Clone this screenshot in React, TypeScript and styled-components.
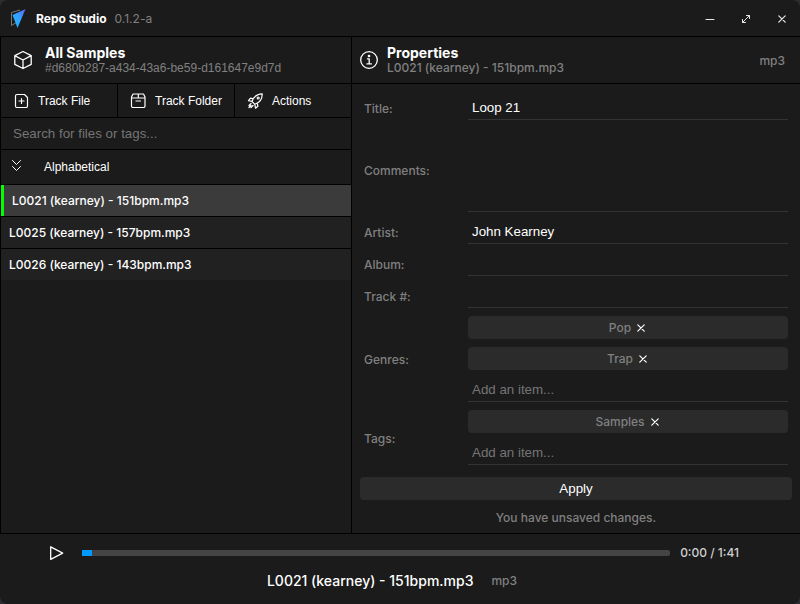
import React, { useState } from "react";
import styled, { createGlobalStyle } from "styled-components";

const c = {
  bg: "#1b1b1b",
  row: "#212121",
  active: "#3b3b3b",
  raised: "#2b2b2b",
  line: "#000000",
  rule: "#333333",
  muted: "#808080",
  dim: "#757575",
  text: "#ffffff",
  accent: "#0099ff",
  track: "#444444",
  green: "#00ff00",
};

const Global = createGlobalStyle`
  * { box-sizing: border-box; }
  html { background: #2c2d31; }
  body { margin: 0; font: 500 12px/16px Inter, sans-serif; color: ${c.text}; }
  button, input, textarea { font-family: "Liberation Sans", Arial, sans-serif; color: inherit; background: none; border: 0; padding: 0; margin: 0; border-radius: 0; outline: 0; }
  button { cursor: pointer; }
  input::placeholder { color: ${c.dim}; opacity: 1; }
  svg { display: block; flex: none; }
`;

const Window = styled.div`
  min-height: 100vh;
  display: flex;
  flex-direction: column;
  background: ${c.bg};
  border-radius: 8px;
  overflow: hidden;
`;

const TitleBar = styled.header`
  height: 36px;
  display: flex;
  align-items: center;
  padding: 1px 8px 0 8px;
`;
const AppName = styled.h1`
  margin: 0 8px 0 9px;
  font-size: 12px;
  font-weight: 700;
  line-height: 16px;
`;
const Version = styled.span`
  flex: 1;
  font-weight: 400;
  color: ${c.muted};
`;
const WindowButton = styled.button`
  width: 36px;
  height: 28px;
  display: grid;
  place-items: center;
  color: #e8e8e8;
  &:last-child { width: 20px; margin-left: 8px; }
`;

const Body = styled.main`
  flex: 1;
  display: grid;
  grid-template-columns: 350px 1fr;
  gap: 1px;
  padding: 1px 0 1px 1px;
  background: ${c.line};
`;
const Panel = styled.section`
  display: flex;
  flex-direction: column;
  background: ${c.bg};
`;
const PanelHeader = styled.header<{ $inset: number }>`
  height: 47px;
  display: flex;
  align-items: center;
  gap: ${(p) => (p.$inset > 8 ? 12 : 8)}px;
  padding: 0 15px 0 ${(p) => p.$inset}px;
  border-bottom: 1px solid ${c.line};
`;
const HeaderText = styled.div`
  flex: 1;
`;
const PanelTitle = styled.h2`
  margin: 0;
  font-size: 14px;
  line-height: 16px;
  font-weight: 700;
`;
const PanelSubtitle = styled.p<{ $code?: boolean }>`
  margin: 0;
  font-family: ${(p) => (p.$code ? `"Liberation Sans", Arial, sans-serif` : "inherit")};
  font-size: 12px;
  line-height: 14px;
  color: ${c.muted};
`;
const FileType = styled.span`
  padding-top: 2px;
  color: ${c.muted};
`;

const Toolbar = styled.div`
  height: 34px;
  display: grid;
  grid-template-columns: 117px 117px 1fr;
  border-bottom: 1px solid ${c.line};
`;
const ToolButton = styled.button`
  display: flex;
  align-items: center;
  gap: 7px;
  padding-left: 12px;
  font-size: 12px;
  border-right: 1px solid ${c.line};
  &:last-child { border-right: 0; }
`;
const Search = styled.input`
  height: 32px;
  padding: 0 12px;
  border-bottom: 1px solid ${c.line};
`;
const SortButton = styled.button`
  height: 35px;
  display: flex;
  align-items: center;
  gap: 19px;
  padding-left: 8px;
  font-size: 12px;
  border-bottom: 1px solid ${c.line};
`;
const FileList = styled.ul`
  margin: 0;
  padding: 0;
  list-style: none;
  display: grid;
  gap: 1px;
  background: ${c.line};
`;
const FileRow = styled.button<{ $active: boolean }>`
  width: 100%;
  height: 31px;
  display: block;
  padding-left: 8px;
  font: inherit;
  text-align: left;
  background: ${(p) => (p.$active ? c.active : c.row)};
  border-left: ${(p) => (p.$active ? `3px solid ${c.green}` : "0")};
`;

const Form = styled.form`
  flex: 1;
  display: flex;
  flex-direction: column;
  padding: 8px 8px 4px;
`;
const Fields = styled.div`
  display: grid;
  grid-template-columns: 104px 1fr;
  row-gap: 8px;
  align-items: center;
  padding: 4px 4px 12px;
`;
const Label = styled.label`
  padding-top: 2px;
  color: ${c.muted};
`;
const TextField = styled.input`
  width: 100%;
  height: 24px;
  padding: 0 4px;
  border-bottom: 1px solid ${c.rule};
`;
const TextArea = styled.textarea`
  display: block;
  width: 100%;
  height: 84px;
  padding: 4px;
  resize: none;
  border-bottom: 1px solid ${c.rule};
`;
const Items = styled.div`
  display: grid;
  gap: 8px;
`;
const Chip = styled.div`
  height: 23px;
  display: flex;
  align-items: center;
  justify-content: center;
  gap: 6px;
  padding-right: 2px;
  border-radius: 4px;
  background: ${c.raised};
  color: ${c.muted};
`;
const Remove = styled.button`
  color: ${c.text};
`;
const Apply = styled.button`
  height: 23px;
  border-radius: 4px;
  background: ${c.raised};
`;
const Notice = styled.p`
  margin: 10px 0 0;
  text-align: center;
  color: ${c.muted};
`;

const Player = styled.footer`
  height: 70px;
  padding-top: 9px;
`;
const Transport = styled.div`
  display: flex;
  align-items: center;
  padding: 0 61px 0 48px;
`;
const PlayButton = styled.button`
  width: 34px;
  height: 20px;
`;
const Seek = styled.input<{ $at: number }>`
  appearance: none;
  flex: 1;
  min-width: 0;
  height: 6px;
  border-radius: 0 2px 2px 0;
  background: linear-gradient(${c.accent}, ${c.accent}) 0 0 / ${(p) => p.$at}px 100% no-repeat ${c.track};
  &::-webkit-slider-thumb { appearance: none; width: 0; height: 6px; }
`;
const Time = styled.span`
  padding-left: 10px;
  color: #d0d0d0;
`;
const NowPlaying = styled.div`
  display: flex;
  align-items: center;
  justify-content: center;
  gap: 18px;
  margin-top: 8px;
  padding-right: 16px;
  font-size: 14px;
  line-height: 20px;
`;
const NowType = styled.span`
  font-size: 12px;
  color: ${c.muted};
`;

type StrokeProps = { size: number; box?: number; width?: number; children: React.ReactNode };
const Stroke = ({ size, box = 16, width = 1, children }: StrokeProps) => (
  <svg width={size} height={size} viewBox={`0 0 ${box} ${box}`} fill="none" stroke="currentColor" strokeWidth={width} strokeLinecap="round" strokeLinejoin="round" aria-hidden="true">
    {children}
  </svg>
);

const Logo = () => (
  <svg width="19" height="22" viewBox="0 0 19 22" aria-hidden="true">
    <defs>
      <linearGradient id="logo" x1="1" y1="0" x2="0.3" y2="1">
        <stop offset="0" stopColor="#5b5cf6" />
        <stop offset="0.5" stopColor="#35a0ff" />
        <stop offset="1" stopColor="#1cb4ff" />
      </linearGradient>
    </defs>
    <path d="M12 2 3.500 4.500V17.500l5-3" fill="none" stroke="#777777" />
    <path d="M17.500 1 4.500 7 9.500 20Z" fill="url(#logo)" />
  </svg>
);
const Cube = () => (
  <Stroke size={20} box={20} width={1.3}>
    <path d="M10 1.5 18.2 5.6v8.8L10 18.5 1.8 14.400V5.600ZM1.800 5.600 10 10l8.200-4.400M10 10v8.500" />
  </Stroke>
);
const Info = () => (
  <Stroke size={20} box={20} width={1.3}>
    <circle cx="10" cy="10" r="8.300" />
    <path d="M8.400 8.800H10.200v5M8 13.900h4.400" />
    <circle cx="10" cy="6" r="0.700" fill="currentColor" />
  </Stroke>
);
const FilePlus = () => (
  <Stroke size={18} box={18} width={1.2}>
    <path d="M4 2.500h7.500l3 3V14a1.500 1.500 0 0 1-1.500 1.500H4A1.500 1.500 0 0 1 2.500 14V4A1.500 1.500 0 0 1 4 2.500ZM8.500 6.500v5M6 9h5" />
  </Stroke>
);
const Archive = () => (
  <Stroke size={18} box={18} width={1.2}>
    <path d="M3 2h10.500l1.500 3v9a1.500 1.500 0 0 1-1.500 1.500h-10.500A1.500 1.500 0 0 1 1.500 14V5ZM1.500 6h13.500M8.300 2v4M6 9h4.500" />
  </Stroke>
);
const Rocket = () => (
  <Stroke size={18} box={18} width={1.2}>
    <path d="M5 9.500C6.300 5.500 9.500 2 15.200 1.800c.2 6-3.200 9.200-7.400 10.500ZM6.200 6.800 3.500 6.200 1.500 8.700l3.600.8M10.200 11l.7 3.200-2.400 2-.7-3.900M4 11.500 2 13.500M6 13.500 4 15.500M4 13.500l-2 2" />
    <circle cx="11.200" cy="6" r="1" />
  </Stroke>
);
const Chevrons = () => (
  <Stroke size={16}>
    <path d="M3.500 1.500 7.500 5.500l4-4M3.500 7.500l4 4 4-4" />
  </Stroke>
);
const Play = () => (
  <Stroke size={18} box={18} width={1.3}>
    <path d="M2.700 2.800v12.600L14.700 9.100Z" />
  </Stroke>
);
const Cross = () => (
  <Stroke size={8} box={8} width={1.2}>
    <path d="m0.800 0.800 6.400 6.400M7.200 0.800 0.800 7.200" />
  </Stroke>
);
const Minimize = () => (
  <Stroke size={10} box={10} width={1}>
    <path d="M1 5.500h8" />
  </Stroke>
);
const Expand = () => (
  <Stroke size={10} box={10} width={1}>
    <path d="M1.500 8.500l7-7M5.500 1.500h3v3M1.500 5.500v3h3" />
  </Stroke>
);

const files = ["L0021 (kearney) - 151bpm.mp3", "L0025 (kearney) - 157bpm.mp3", "L0026 (kearney) - 143bpm.mp3"];

type TagFieldProps = { id: string; label: string; initial: string[] };
const TagField = ({ id, label, initial }: TagFieldProps) => {
  const [items, setItems] = useState(initial);
  return (
    <>
      <Label htmlFor={id}>{label}</Label>
      <Items>
        {items.map((item) => (
          <Chip key={item}>
            {item}
            <Remove type="button" aria-label={`Remove ${item}`} onClick={() => setItems(items.filter((i) => i !== item))}>
              <Cross />
            </Remove>
          </Chip>
        ))}
        <TextField id={id} placeholder="Add an item..." />
      </Items>
    </>
  );
};

export default function App() {
  const [selected, setSelected] = useState(files[0]);
  const [position, setPosition] = useState("0");
  return (
    <Window>
      <Global />
      <TitleBar>
        <Logo />
        <AppName>Repo Studio</AppName>
        <Version>0.1.2-a</Version>
        <WindowButton aria-label="Minimize"><Minimize /></WindowButton>
        <WindowButton aria-label="Maximize"><Expand /></WindowButton>
        <WindowButton aria-label="Close"><Cross /></WindowButton>
      </TitleBar>
      <Body>
        <Panel>
          <PanelHeader $inset={12}>
            <Cube />
            <HeaderText>
              <PanelTitle>All Samples</PanelTitle>
              <PanelSubtitle $code>#d680b287-a434-43a6-be59-d161647e9d7d</PanelSubtitle>
            </HeaderText>
          </PanelHeader>
          <Toolbar>
            <ToolButton><FilePlus />Track File</ToolButton>
            <ToolButton><Archive />Track Folder</ToolButton>
            <ToolButton><Rocket />Actions</ToolButton>
          </Toolbar>
          <Search aria-label="Search" placeholder="Search for files or tags..." />
          <SortButton><Chevrons />Alphabetical</SortButton>
          <FileList>
            {files.map((name) => (
              <li key={name}>
                <FileRow $active={name === selected} onClick={() => setSelected(name)}>{name}</FileRow>
              </li>
            ))}
          </FileList>
        </Panel>
        <Panel>
          <PanelHeader $inset={7}>
            <Info />
            <HeaderText>
              <PanelTitle>Properties</PanelTitle>
              <PanelSubtitle>L0021 (kearney) - 151bpm.mp3</PanelSubtitle>
            </HeaderText>
            <FileType>mp3</FileType>
          </PanelHeader>
          <Form onSubmit={(e) => e.preventDefault()}>
            <Fields>
              <Label htmlFor="title">Title:</Label>
              <TextField id="title" defaultValue="Loop 21" />
              <Label htmlFor="comments">Comments:</Label>
              <TextArea id="comments" />
              <Label htmlFor="artist">Artist:</Label>
              <TextField id="artist" defaultValue="John Kearney" />
              <Label htmlFor="album">Album:</Label>
              <TextField id="album" />
              <Label htmlFor="track">Track #:</Label>
              <TextField id="track" />
              <TagField id="genres" label="Genres:" initial={["Pop", "Trap"]} />
              <TagField id="tags" label="Tags:" initial={["Samples"]} />
            </Fields>
            <Apply type="submit">Apply</Apply>
            <Notice>You have unsaved changes.</Notice>
          </Form>
        </Panel>
      </Body>
      <Player>
        <Transport>
          <PlayButton aria-label="Play"><Play /></PlayButton>
          <Seek $at={10} type="range" min="0" max="101" value={position} onChange={(e) => setPosition(e.target.value)} aria-label="Position" />
          <Time>0:00 / 1:41</Time>
        </Transport>
        <NowPlaying>
          {selected}
          <NowType>mp3</NowType>
        </NowPlaying>
      </Player>
    </Window>
  );
}
